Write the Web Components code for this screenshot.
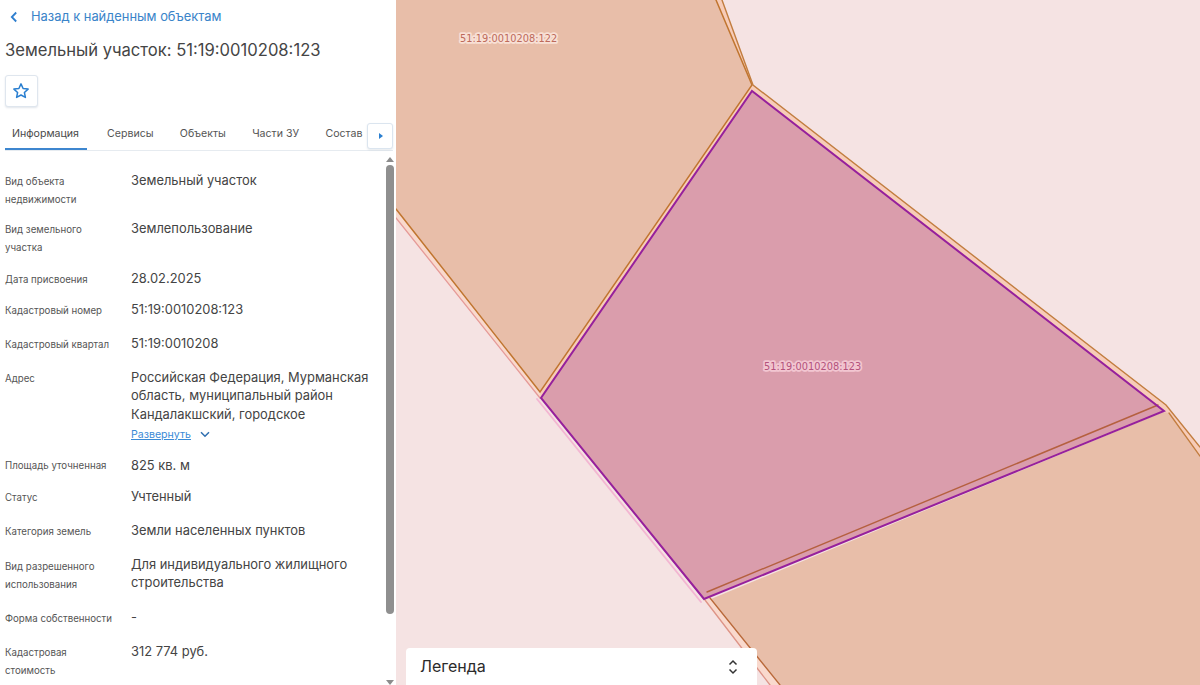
<!DOCTYPE html>
<html lang="ru"><head><meta charset="utf-8"><title>Земельный участок</title>
<style>
html,body{margin:0;padding:0;height:100%;overflow:hidden;background:#fff;font-family:Inter,"Noto Sans",sans-serif}
</style></head><body>
<app-shell>
  <info-panel>
    <back-link slot="head">Назад к найденным объектам</back-link>
    <h-title slot="head">Земельный участок: 51:19:0010208:123</h-title>
    <star-button slot="head"></star-button>
    <tab-bar slot="head"></tab-bar>
    <prop-row label="Вид объекта недвижимости" style="--lw:100px;--pt:20px;--pb:10px">Земельный участок</prop-row>
    <prop-row label="Вид земельного участка" style="--lw:100px;--pb:12px">Землепользование</prop-row>
    <prop-row label="Дата присвоения" style="--pb:11px">28.02.2025</prop-row>
    <prop-row label="Кадастровый номер" style="--pb:14px">51:19:0010208:123</prop-row>
    <prop-row label="Кадастровый квартал" style="--pb:14px">51:19:0010208</prop-row>
    <prop-row label="Адрес" style="--pb:12px">Российская Федерация, Мурманская область, муниципальный район Кандалакшский, городское<expand-link>Развернуть</expand-link></prop-row>
    <prop-row label="Площадь уточненная" style="--pb:12px;--vt:2px">825 кв. м</prop-row>
    <prop-row label="Статус" style="--pb:14px">Учтенный</prop-row>
    <prop-row label="Категория земель" style="--pb:15px">Земли населенных пунктов</prop-row>
    <prop-row label="Вид разрешенного использования" style="--lw:100px;--pb:14px;--vt:0px">Для индивидуального жилищного строительства</prop-row>
    <prop-row label="Форма собственности" style="--pb:14px">-</prop-row>
    <prop-row label="Кадастровая стоимость" style="--lw:100px;--pb:0px">312 774 руб.</prop-row>
  </info-panel>
  <map-view><legend-box>Легенда</legend-box></map-view>
</app-shell>
<script>
function def(name, css, html, init){
  customElements.define(name, class extends HTMLElement{
    constructor(){super();const r=this.attachShadow({mode:'open'});r.innerHTML='<style>'+css+'</style>'+html;if(init)init(this,r);}
  });
}
def('app-shell',':host{display:flex;width:1200px;height:685px;overflow:hidden}','<slot></slot>');

def('info-panel',`:host{display:flex;flex:none;width:396px;height:685px;flex-direction:column;background:#fff;overflow:hidden;position:relative}
.scroll{flex:1;min-height:0;display:flex;padding-right:2px}
.body{flex:1;min-width:0;overflow:hidden;padding-left:5px;padding-right:10px}
.bar{flex:none;width:8px;display:flex;flex-direction:column;align-items:center}
.arrow{flex:none;width:0;height:0;border-left:4px solid transparent;border-right:4px solid transparent}
.up{border-bottom:5px solid #8c8c8c;margin:6px 0 3px}
.thumb{flex:none;width:8px;height:449px;border-radius:4px;background:#8f8f8f}
.fill{flex:1}
.down{border-top:5px solid #8c8c8c}`,
`<slot name="head"></slot><div class="scroll"><div class="body"><slot></slot></div><div class="bar"><div class="arrow up"></div><div class="thumb"></div><div class="fill"></div><div class="arrow down"></div></div></div>`);

def('back-link',`:host{display:flex;align-items:center;height:14px;padding:10px 0 0 10px;color:#3a84c9;font-size:12.9px;line-height:14px}
svg{flex:none;width:8px;height:12px;margin-right:13px}`,
`<svg viewBox="0 0 8 12"><path d="M6.200 1.500 1.800 6l4.400 4.500" fill="none" stroke="#2f7fcf" stroke-width="1.800"/></svg><slot></slot>`);

def('h-title',`:host{display:block;padding:16px 0 0 5px;font-size:16.6px;line-height:20px;color:#454545;white-space:nowrap}`,'<slot></slot>');

def('star-button',`:host{display:flex;align-items:center;justify-content:center;box-sizing:border-box;width:33px;height:32px;margin:15px 0 0 5px;background:#fff;border:1px solid #dfe6ee;border-radius:3px;box-shadow:0 1px 2px rgba(40,70,110,.14)}
svg{width:18px;height:18px;display:block;margin-left:-1px}`,
`<svg viewBox="0 0 18 18"><path d="M9 1.900l2.100 4.600 5 .6-3.700 3.400 1 4.900L9 13l-4.400 2.400 1-4.900L1.900 7.100l5-.6z" fill="none" stroke="#2a7fd0" stroke-width="1.500" stroke-linejoin="round"/></svg>`);

def('tab-bar',`:host{display:flex;position:relative;box-sizing:border-box;height:34px;margin:10px 3px 0 5px;border-bottom:1px solid #e6ebf0;font-size:10.6px;line-height:14px;color:#555;white-space:nowrap}
.t{flex:none;box-sizing:border-box;height:33px;padding-top:10px}
.a{width:82px;padding-left:7px;color:#4a4a4a;border-bottom:2px solid #3d86cf;margin-right:20px}
.n{margin-right:26.300px}
.more{position:absolute;right:0;top:6px;width:26px;height:26px;box-sizing:border-box;background:#fff;border:1px solid #dbe5ef;border-radius:3px;box-shadow:0 1px 2px rgba(40,70,110,.12);display:flex;align-items:center;justify-content:center}
.more i{display:block;width:0;height:0;margin-left:2px;border-left:4px solid #2a7fd0;border-top:3.500px solid transparent;border-bottom:3.500px solid transparent}`,
`<div class="t a">Информация</div><div class="t n">Сервисы</div><div class="t n">Объекты</div><div class="t n">Части ЗУ</div><div class="t n">Состав</div><div class="more"><i></i></div>`);

def('prop-row',`:host{display:grid;grid-template-columns:126px 1fr;align-items:start;padding-top:var(--pt,0);padding-bottom:var(--pb,13px)}
.l{font-size:9.7px;line-height:18px;color:#555;max-width:var(--lw,126px);padding-top:1px;margin-top:1px}
.v{font-size:12.9px;line-height:18.300px;color:#444;margin-top:var(--vt,1px)}`,
`<div class="l"></div><div class="v"><slot></slot></div>`,(el,r)=>{r.querySelector('.l').textContent=el.getAttribute('label')});

def('expand-link',`:host{display:flex;align-items:center;height:16px;margin-top:3px;font-size:10.6px;line-height:16px;color:#3a8ad6}
span{text-decoration:underline}
svg{width:10px;height:7px;margin-left:9px}`,
`<span><slot></slot></span><svg viewBox="0 0 10 7"><path d="M1 1.200 5 5.200l4-4" fill="none" stroke="#2f6fb0" stroke-width="1.500"/></svg>`);

def('map-view',`:host{display:block;flex:1;position:relative;height:685px;background:#f5e3e3;overflow:hidden}
svg{position:absolute;left:0;top:0;width:804px;height:685px}
text{font-family:"DejaVu Sans",sans-serif;font-size:9.800px;paint-order:stroke;stroke-width:3.500px;stroke-linejoin:round}`,
`<svg viewBox="396 0 804 685">
<polygon points="396,209 396,218 540,398 703,599 770,685 780,685 711,598 541,394" fill="#f9d9cd"/>
<polygon points="716,0 722,0 753,85 1166,405 1200,447 1200,462 1164,411 752,91 541,398 540,393 752,85" fill="#f7ccb8"/>
<polygon points="396,0 716,0 752,85 540,392 396,209" fill="#e8bea9"/>
<polygon points="711,599 1163,412 1169,413 1200,456 1200,685 780,685" fill="#e8bea9"/>
<polygon points="752,91 1164,411 703,599 541,398" fill="#da9dac"/>
<g fill="none" stroke-linecap="round">
<path d="M716 0 752 85 540 392 396 209" stroke="#c0752f" stroke-width="1.500"/>
<path d="M722 0 753 85 1166 405 1200 447" stroke="#c27d3f" stroke-width="1.400"/>
<path d="M1158 405 707 592" stroke="#b5603f" stroke-width="1.400"/>
<path d="M396 218 540 398" stroke="#e59a98" stroke-width="1.300"/>
<path d="M705 600 770 685" stroke="#dd9488" stroke-width="1.300"/>
<path d="M710 598 780 685" stroke="#b9693a" stroke-width="1.300"/>
<path d="M1169 413 1200 456" stroke="#c27d3f" stroke-width="1.300"/>
<path d="M537 399 701 602" stroke="#f3b6d2" stroke-width="1.800"/>
</g>
<polygon points="752,91 1164,411 704,599 541,398" fill="none" stroke="#96209c" stroke-width="2" stroke-linejoin="miter"/>
<text x="460" y="42" fill="#bd6a5b" stroke="#f8e0d5">51:19:0010208:122</text>
<text x="764" y="370" fill="#b4527c" stroke="#f2c6d1">51:19:0010208:123</text>
</svg><slot></slot>`);

def('legend-box',`:host{display:flex;position:absolute;left:10px;top:648px;width:351px;height:37px;box-sizing:border-box;padding:0 19px 2px 14px;align-items:center;justify-content:space-between;background:#fff;border-radius:4px 4px 0 0;font-size:16px;color:#2b2b2b}
svg{width:10px;height:16px;display:block;margin-top:2px}`,
`<slot></slot><svg viewBox="0 0 10 16"><path d="M1.500 5.500 5 2l3.500 3.500M1.500 10.500 5 14l3.500-3.500" fill="none" stroke="#333" stroke-width="1.500"/></svg>`);
</script>
</body></html>
